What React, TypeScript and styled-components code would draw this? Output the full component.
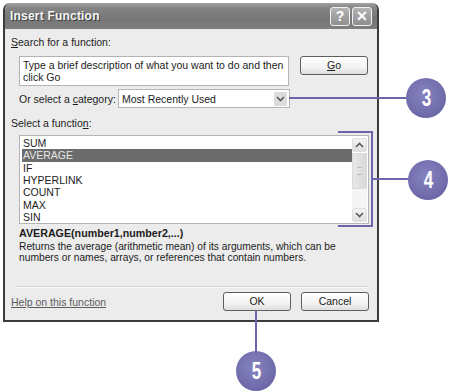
import React, { FC } from 'react'
import styled, { createGlobalStyle } from 'styled-components'

const GlobalStyle = createGlobalStyle`
  html, body {
    margin: 0;
    padding: 0;
    background: #ffffff;
  }
  body {
    font-family: "Liberation Sans", Arial, sans-serif;
    font-size: 10.5px;
    color: #1c1c1c;
  }
`

const Page = styled.div`
  position: relative;
  width: 450px;
  height: 392px;
  box-sizing: border-box;
  padding: 3px 0 0 3px;
  background: #ffffff;
  overflow: hidden;
`

const Dialog = styled.div`
  width: 376px;
  height: 319px;
  box-sizing: border-box;
  display: flex;
  flex-direction: column;
  border: 2px solid #3b3b3b;
  border-top: none;
  border-radius: 7px 7px 0 0;
  overflow: hidden;
  background: #ececec;
`

const TitleBar = styled.div`
  height: 26px;
  flex: none;
  display: flex;
  align-items: center;
  justify-content: space-between;
  padding: 0 5px 0 5px;
  background: linear-gradient(#a2a2a2 0%, #858585 18%, #767676 60%, #7e7e7e 100%);
`

const Title = styled.span`
  font-size: 12px;
  font-weight: bold;
  letter-spacing: 0.2px;
  color: #f6f6f6;
  text-shadow: 1px 1px 0 #3c3c3c;
`

const TitleButtons = styled.div`
  display: flex;
  gap: 2px;
  margin-top: 1px;
`

const TitleButton = styled.div`
  width: 18px;
  height: 17px;
  border: 1px solid #f2f2f2;
  border-radius: 3px;
  background: linear-gradient(#b4b4b4, #8e8e8e);
  color: #ffffff;
  font-weight: bold;
  font-size: 14px;
  line-height: 17px;
  text-align: center;
`

const Body = styled.div`
  flex: 1;
  display: flex;
  flex-direction: column;
  padding: 7px 8px 0 6px;
`

const Label = styled.div<{ $mt?: number }>`
  line-height: 13px;
  height: 13px;
  margin-top: ${p => p.$mt ?? 0}px;
`

const Key = styled.span`
  text-decoration: underline;
`

const SearchRow = styled.div`
  display: flex;
  align-items: flex-start;
  margin: 7px 0 0 8px;
`

const SearchBox = styled.div`
  width: 270px;
  height: 30px;
  box-sizing: border-box;
  border: 1px solid #b4b4b4;
  background: #ffffff;
  padding: 2px 3px 0 3px;
  line-height: 12px;
`

const PushButton = styled.div<{ $ml?: number }>`
  width: 68px;
  height: 19px;
  box-sizing: border-box;
  margin-left: ${p => p.$ml ?? 0}px;
  border: 1px solid #5e5e5e;
  border-radius: 3px;
  background: linear-gradient(#ffffff 0%, #f3f3f3 60%, #dedede 100%);
  text-align: center;
  line-height: 17px;
`

const CategoryRow = styled.div`
  display: flex;
  align-items: center;
  margin: 3px 0 0 8px;
`

const CategoryLabel = styled.span`
  width: 99px;
`

const SelectBox = styled.div`
  width: 172px;
  height: 19px;
  box-sizing: border-box;
  display: flex;
  align-items: center;
  justify-content: space-between;
  border: 1px solid #b4b4b4;
  background: #ffffff;
  padding: 0 2px 0 3px;
`

const DropButton = styled.div`
  width: 13px;
  height: 14px;
  display: flex;
  align-items: center;
  justify-content: center;
  background: #dcdcdc;
  border-radius: 1px;
`

const ListBox = styled.div`
  margin: 5px 0 0 8px;
  width: 350px;
  height: 89px;
  box-sizing: border-box;
  display: flex;
  border: 1px solid #b4b4b4;
  background: #ffffff;
`

const Items = styled.div`
  flex: 1;
  padding: 1px 0 0 2px;
`

const Item = styled.div<{ $selected?: boolean }>`
  height: 12.33px;
  line-height: 12.33px;
  padding-left: 1px;
  background: ${p => (p.$selected ? '#6c6c6c' : 'transparent')};
  color: ${p => (p.$selected ? '#e6e6e6' : '#1c1c1c')};
`

const ScrollBar = styled.div`
  width: 16px;
  display: flex;
  flex-direction: column;
  padding: 2px 1px 1px 0;
  box-sizing: border-box;
`

const ScrollArrow = styled.div`
  height: 14px;
  display: flex;
  align-items: center;
  justify-content: center;
  background: linear-gradient(#f4f4f4, #dedede);
  border: 1px solid #e0e0e0;
  border-radius: 2px;
  box-sizing: border-box;
`

const Thumb = styled.div`
  height: 36px;
  margin-top: 1px;
  background: linear-gradient(90deg, #e8e8e8, #d8d8d8);
  border: 1px solid #dadada;
  box-sizing: border-box;
  display: flex;
  align-items: center;
  justify-content: center;
`

const Grip = styled.div`
  width: 5px;
  height: 6px;
  border-top: 1px solid #bcbcbc;
  border-bottom: 1px solid #bcbcbc;
`

const Track = styled.div`
  flex: 1;
  background: #f5f5f5;
`

const Signature = styled.div`
  margin: 3px 0 0 8px;
  font-weight: bold;
  font-size: 10.7px;
  line-height: 13px;
  height: 13px;
`

const Description = styled.div`
  margin: 1px 0 0 8px;
  font-size: 10.25px;
  line-height: 11px;
`

const Separator = styled.div`
  margin: 23px 0 0 6px;
  height: 0;
  border-top: 1px solid #d6d6d6;
  border-bottom: 1px solid #fafafa;
`

const Footer = styled.div`
  display: flex;
  align-items: center;
  margin-top: 4px;
`

const HelpLink = styled.span`
  color: #5c5c5c;
  text-decoration: underline;
  margin-right: auto;
`

const CalloutLine = styled.div<{ $x: number; $y: number; $w: number; $h: number }>`
  position: absolute;
  left: ${p => p.$x}px;
  top: ${p => p.$y}px;
  width: ${p => p.$w}px;
  height: ${p => p.$h}px;
  background: #6a66a8;
`

const Bubble = styled.div<{ $cx: number; $cy: number }>`
  position: absolute;
  left: ${p => p.$cx - 20}px;
  top: ${p => p.$cy - 20}px;
  width: 40px;
  height: 40px;
  border-radius: 50%;
  background: radial-gradient(circle at 45% 40%, #8783c0 0%, #736fae 55%, #5f5b9d 100%);
  display: flex;
  align-items: center;
  justify-content: center;
  color: #ffffff;
  font-weight: bold;
  font-size: 23px;
`

const BubbleNum = styled.span`
  display: inline-block;
  transform: scaleX(0.74);
  line-height: 23px;
`

const Chevron: FC<{ up?: boolean }> = ({ up }) => (
  <svg width="9" height="6" viewBox="0 0 9 6">
    <path
      d={up ? 'M1 5 L4.5 1.5 L8 5' : 'M1 1 L4.5 4.5 L8 1'}
      fill="none"
      stroke="#5a5a5a"
      strokeWidth="1.6"
    />
  </svg>
)

const functions = ['SUM', 'AVERAGE', 'IF', 'HYPERLINK', 'COUNT', 'MAX', 'SIN']

const App: FC = () => {
  return (
    <Page>
      <GlobalStyle />
      <Dialog>
        <TitleBar>
          <Title>Insert Function</Title>
          <TitleButtons>
            <TitleButton>?</TitleButton>
            <TitleButton>✕</TitleButton>
          </TitleButtons>
        </TitleBar>
        <Body>
          <Label>
            <Key>S</Key>earch for a function:
          </Label>
          <SearchRow>
            <SearchBox>
              Type a brief description of what you want to do and then
              <br />
              click Go
            </SearchBox>
            <PushButton $ml={11}>
              <Key>G</Key>o
            </PushButton>
          </SearchRow>
          <CategoryRow>
            <CategoryLabel>
              Or select a <Key>c</Key>ategory:
            </CategoryLabel>
            <SelectBox>
              Most Recently Used
              <DropButton>
                <Chevron />
              </DropButton>
            </SelectBox>
          </CategoryRow>
          <Label $mt={9}>
            Select a functio<Key>n</Key>:
          </Label>
          <ListBox>
            <Items>
              {functions.map(name => (
                <Item key={name} $selected={name === 'AVERAGE'}>
                  {name}
                </Item>
              ))}
            </Items>
            <ScrollBar>
              <ScrollArrow>
                <Chevron up />
              </ScrollArrow>
              <Thumb>
                <Grip />
              </Thumb>
              <Track />
              <ScrollArrow>
                <Chevron />
              </ScrollArrow>
            </ScrollBar>
          </ListBox>
          <Signature>AVERAGE(number1,number2,...)</Signature>
          <Description>
            Returns the average (arithmetic mean) of its arguments, which can be
            <br />
            numbers or names, arrays, or references that contain numbers.
          </Description>
          <Separator />
          <Footer>
            <HelpLink>Help on this function</HelpLink>
            <PushButton>OK</PushButton>
            <PushButton $ml={10}>Cancel</PushButton>
          </Footer>
        </Body>
      </Dialog>

      <CalloutLine $x={289} $y={97} $w={120} $h={2} />
      <Bubble $cx={426} $cy={98}>
        <BubbleNum>3</BubbleNum>
      </Bubble>

      <CalloutLine $x={338} $y={131} $w={35} $h={2} />
      <CalloutLine $x={371} $y={131} $w={2} $h={96} />
      <CalloutLine $x={338} $y={225} $w={35} $h={2} />
      <CalloutLine $x={371} $y={178} $w={40} $h={2} />
      <Bubble $cx={428} $cy={180}>
        <BubbleNum>4</BubbleNum>
      </Bubble>

      <CalloutLine $x={255} $y={311} $w={2} $h={42} />
      <Bubble $cx={256} $cy={371}>
        <BubbleNum>5</BubbleNum>
      </Bubble>
    </Page>
  )
}

export default App
